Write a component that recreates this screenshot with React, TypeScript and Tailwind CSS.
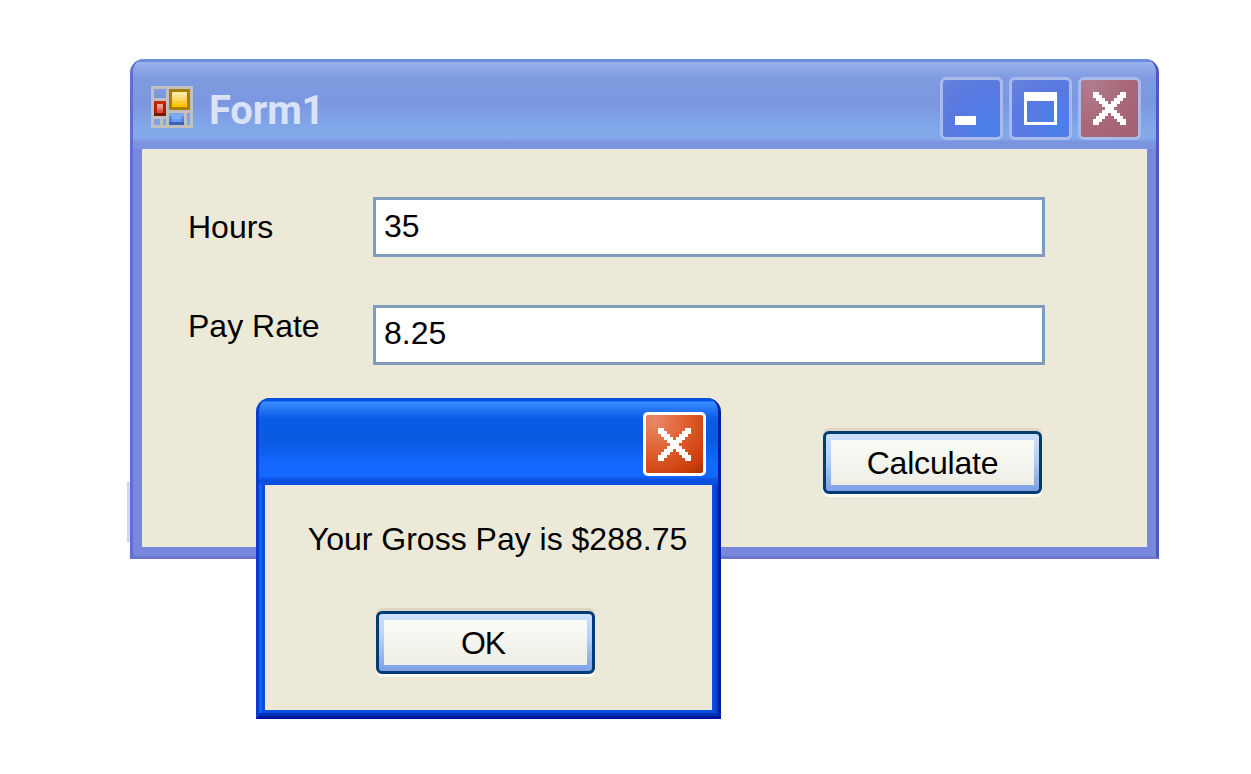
const X_MAP = [
  "XX.......XX",
  "XXX.....XXX",
  ".XXX...XXX.",
  "..XXX.XXX..",
  "...XXXXX...",
  "....XXX....",
  "...XXXXX...",
  "..XXX.XXX..",
  ".XXX...XXX.",
  "XXX.....XXX",
  "XX.......XX",
];

function PixelX() {
  return (
    <svg width="33" height="33" viewBox="0 0 11 11" shapeRendering="crispEdges">
      {X_MAP.map((row, y) =>
        row.split("").map((c, x) => (c === "X" ? <rect key={`${x}-${y}`} x={x} y={y} width="1" height="1" fill="#fff" /> : null))
      )}
    </svg>
  );
}

function AppIcon() {
  return (
    <svg width="42" height="42" viewBox="0 0 14 14" shapeRendering="crispEdges" className="mt-[27px] shrink-0">
      <path fill="#c0c0c0" fillRule="evenodd" d="M0 0h14v14H0z M1 1v3h4V1z M1 11v2h2v-2z M4 11v2h1v-2z M12 9v4h1V9z" />
      <rect x="1" y="5" width="4" height="5" fill="#7a1608" />
      <rect x="1" y="5" width="4" height="1" fill="#c02a08" />
      <rect x="1" y="6" width="1" height="3" fill="#b02208" />
      <rect x="2" y="6" width="2" height="1" fill="#f0a090" />
      <rect x="2" y="7" width="2" height="1" fill="#e88070" />
      <rect x="2" y="8" width="2" height="1" fill="#d85040" />
      <rect x="4" y="6" width="1" height="3" fill="#a02008" />
      <rect x="6" y="1" width="7" height="7" fill="#a88000" />
      <rect x="7" y="2" width="5" height="1" fill="#fde9a8" />
      <rect x="7" y="3" width="5" height="1" fill="#fde08a" />
      <rect x="7" y="4" width="5" height="1" fill="#fdd760" />
      <rect x="7" y="5" width="5" height="1" fill="#fdcc30" />
      <rect x="7" y="6" width="5" height="1" fill="#fdc400" />
      <rect x="6" y="9" width="5" height="1" fill="#7ea8e8" />
      <rect x="6" y="10" width="5" height="1" fill="#5f90e0" />
      <rect x="7" y="10" width="3" height="1" fill="#80aaff" />
      <rect x="6" y="11" width="5" height="1" fill="#4f7fd8" />
      <rect x="7" y="11" width="3" height="1" fill="#6a9cff" />
      <rect x="6" y="12" width="5" height="1" fill="#3a62b0" />
    </svg>
  );
}

function CaptionButton({ className, children }: { className: string; children?: React.ReactNode }) {
  return (
    <div className={`w-[63px] h-[63px] shrink-0 rounded-[6px] border-[3px] border-[#a9bbec] flex items-center justify-center ${className}`}>
      {children}
    </div>
  );
}

function XpButton({ label, textClass }: { label: string; textClass?: string }) {
  return (
    <div className="w-[219px] h-[63px] rounded-[6px] border-[3px] border-[#003c74] p-[6px_5px] bg-[linear-gradient(180deg,#cee0fd_0%,#b8d2f6_40%,#7d9fe6_100%)] shadow-[0_3px_0_#fbfbf6,0_-3px_0_#dcd6c2]">
      <div className={`h-full flex items-center justify-center bg-[linear-gradient(180deg,#fbfbf7,#eeeee5)] text-[32px] leading-none text-black ${textClass ?? ""}`}>
        {label}
      </div>
    </div>
  );
}

function Row({ label, value, labelShift, valueShift }: { label: string; value: string; labelShift: string; valueShift: string }) {
  return (
    <div className="flex items-center pl-[46px] h-[60px]">
      <div className={`w-[185px] text-[32px] leading-none text-black ${labelShift}`}>{label}</div>
      <div className="w-[672px] h-[60px] border-[3px] border-[#7f9db9] bg-white pl-[8px] flex items-center text-[32px] leading-none text-black">
        <span className={valueShift}>{value}</span>
      </div>
    </div>
  );
}

export default function App() {
  return (
    <div className="relative w-full h-[774px] bg-white pl-[130px] pt-[59px] font-['Liberation_Sans',sans-serif] font-normal overflow-hidden">
      <div className="w-[1029px] h-[500px] flex flex-col rounded-t-[14px] overflow-hidden bg-[#7888de] border-x-[3px] border-b-[3px] border-l-[#5f6fd2] border-r-[#5058c0] border-b-[#6c78d0]">
        <div className="h-[90px] shrink-0 flex items-start pl-[18px] pr-[15px] bg-[linear-gradient(180deg,#6a8ddc_0%,#6a8ddc_3%,#9ab5ec_4%,#8ea9e8_10%,#7e9be0_22%,#7b97e0_50%,#82a8ea_78%,#84a9ea_88%,#7c94e0_92%,#7c94e0_100%)]">
          <AppIcon />
          <div className="ml-[16px] mt-[29px] font-['Roboto',sans-serif] text-[40px] leading-[46px] font-bold tracking-[-0.2px] text-[#d8e3f8]">Form1</div>
          <div className="ml-auto mt-[18px] flex gap-[6px]">
            <CaptionButton className="items-end justify-start pb-[12px] pl-[12px] bg-[radial-gradient(circle_at_80%_80%,#4a80ea,#5a78e0_60%,#6484dc)]">
              <div className="w-[21px] h-[9px] bg-white" />
            </CaptionButton>
            <CaptionButton className="bg-[radial-gradient(circle_at_80%_80%,#4a80ea,#5a78e0_60%,#6484dc)]">
              <div className="w-[33px] h-[33px] border-[3px] border-t-[9px] border-white" />
            </CaptionButton>
            <CaptionButton className="bg-[radial-gradient(circle_at_15%_10%,#b07c8c,#a86878_55%,#a06070)]">
              <PixelX />
            </CaptionButton>
          </div>
        </div>
        <div className="flex-1 mx-[9px] mb-[9px] bg-[#ece9d8] pt-[48px] flex flex-col gap-[48px]">
          <Row label="Hours" value="35" labelShift="" valueShift="-mt-[2px]" />
          <Row label="Pay Rate" value="8.25" labelShift="-mt-[18px]" valueShift="-mt-[4px]" />
          <div className="flex justify-end pr-[105px] mt-[18px]">
            <XpButton label="Calculate" textClass="tracking-[-0.2px]" />
          </div>
        </div>
      </div>

      <div className="absolute left-[127px] top-[482px] w-[3px] h-[60px] bg-[#d0d8f0]" />

      <div className="absolute left-[256px] top-[398px] w-[465px] h-[321px] flex flex-col rounded-t-[14px] overflow-hidden bg-[#0a50e0] border-l-[3px] border-l-[#0a3ad0] border-r-[3px] border-r-[#0020a0] border-b-[3px] border-b-[#00169e]">
        <div className="h-[87px] shrink-0 flex items-start justify-end pr-[12px] pt-[14px] bg-[linear-gradient(180deg,#0050e0_0%,#0050e0_3%,#3a8cff_5%,#2878f4_12%,#0a5ce6_24%,#0a5ae2_50%,#1468ff_76%,#1468ff_90%,#0a50e0_94%,#0a50e0_100%)]">
          <div className="w-[63px] h-[64px] rounded-[5px] border-[3px] border-white flex items-center justify-center bg-[radial-gradient(circle_at_15%_10%,#e88a68,#dd5a28_50%,#c83c08_85%,#a83000)]">
            <PixelX />
          </div>
        </div>
        <div className="flex-1 flex border-b-[3px] border-b-[#0030b8]">
          <div className="w-[3px] bg-[#1a60e8]" />
          <div className="flex-1 ml-[3px] mr-[3px] mb-[3px] bg-[#ece9d8] flex flex-col items-center">
            <div className="mt-[38px] ml-[18px] text-[32px] leading-none text-black whitespace-nowrap">Your Gross Pay is $288.75</div>
            <div className="mt-[56px] -ml-[6px]">
              <XpButton label="OK" textClass="tracking-[-1px] pr-[5px]" />
            </div>
          </div>
          <div className="w-[3px] bg-[#0a3ad0]" />
        </div>
      </div>
    </div>
  );
}
